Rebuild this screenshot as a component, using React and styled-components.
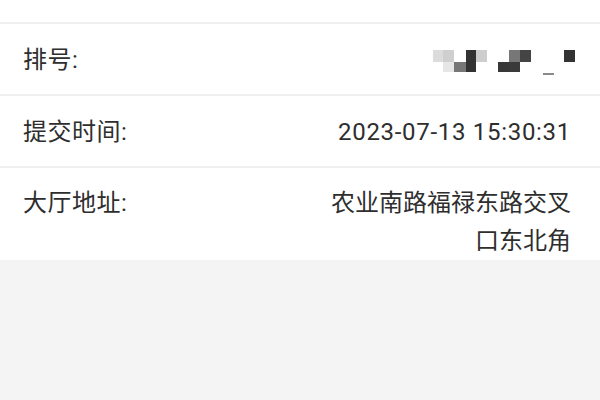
import React from 'react'
import styled, { createGlobalStyle } from 'styled-components'

const GlobalStyle = createGlobalStyle`
    html, body {
        margin: 0;
        padding: 0;
        background: #f4f4f4;
    }
    body {
        font-family: Roboto, "Noto Sans CJK SC", sans-serif;
        color: #2e2e2e;
        overflow: hidden;
    }
`

const Page = styled.div`
    width: 600px;
    height: 400px;
    overflow: hidden;
    background: #f4f4f4;
`

const InfoList = styled.ul`
    list-style: none;
    margin: -48px 0 0;
    padding: 0;
    background: #fff;
`

const InfoRow = styled.li`
    display: flex;
    justify-content: space-between;
    align-items: flex-start;
    padding: ${(p) => (p.$last ? '16px 29px 0 23px' : '18px 29px 16px 23px')};
    border-bottom: ${(p) => (p.$last ? 'none' : '2px solid #efefef')};
    font-size: 24px;
    line-height: ${(p) => (p.$tall ? '38px' : '36px')};
`

const FadedRow = styled(InfoRow)`
    color: #e4e4e4;
`

const Label = styled.span`
    flex: none;
    letter-spacing: 0.5px;
`

const Value = styled.span`
    max-width: 250px;
    text-align: right;
    letter-spacing: ${(p) => (p.$digits ? '0.7px' : '0')};
`

const Mosaic = styled.svg`
    display: block;
    margin: 8px -4px 0 0;
`

const blocks = [
    [0, 0, 11, 12, '#dcdcdc'],
    [10, 0, 11, 12, '#cfcfcf'],
    [10, 12, 11, 10, '#e6e6e6'],
    [21, 12, 12, 10, '#777'],
    [33, 0, 10, 22, '#333'],
    [43, 0, 11, 12, '#cdcdcd'],
    [65, 12, 11, 10, '#383838'],
    [76, 0, 11, 12, '#777'],
    [76, 12, 11, 10, '#3a3a3a'],
    [87, 0, 11, 12, '#444'],
    [110, 23, 11, 2, '#8a8a8a'],
    [131, 0, 11, 12, '#333'],
]

function MaskedNumber() {
    return (
        <Mosaic width="142" height="26" viewBox="0 0 142 26">
            {blocks.map(([x, y, w, h, c], i) => (
                <rect key={i} x={x} y={y} width={w} height={h} fill={c} />
            ))}
        </Mosaic>
    )
}

export default function App() {
    return (
        <Page>
            <GlobalStyle />
            <InfoList>
                <FadedRow>
                    <Label>业务类型:</Label>
                    <Value>户籍办理</Value>
                </FadedRow>
                <InfoRow>
                    <Label>排号:</Label>
                    <MaskedNumber />
                </InfoRow>
                <InfoRow>
                    <Label>提交时间:</Label>
                    <Value $digits>2023-07-13 15:30:31</Value>
                </InfoRow>
                <InfoRow $tall $last>
                    <Label>大厅地址:</Label>
                    <Value>农业南路福禄东路交叉口东北角</Value>
                </InfoRow>
            </InfoList>
        </Page>
    )
}
